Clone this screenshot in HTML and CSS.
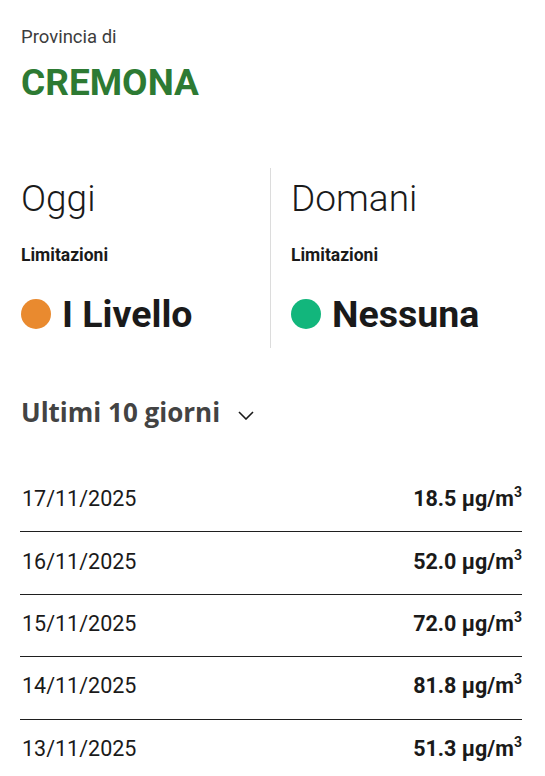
FILE: index.html
```html
<!DOCTYPE html>
<html lang="it">
<head>
<meta charset="utf-8">
<title>Provincia di Cremona</title>
<link rel="stylesheet" href="styles.css">
</head>
<body>
<main class="page">
  <header class="head">
    <p class="kicker">Provincia di</p>
    <h1 class="title">CREMONA</h1>
  </header>

  <section class="days">
    <div class="day">
      <h2 class="day-name">Oggi</h2>
      <p class="label">Limitazioni</p>
      <p class="level"><span class="dot dot-orange"></span>I Livello</p>
    </div>
    <div class="day day-right">
      <h2 class="day-name">Domani</h2>
      <p class="label">Limitazioni</p>
      <p class="level"><span class="dot dot-green"></span>Nessuna</p>
    </div>
  </section>

  <button class="toggle" type="button">
    <span>Ultimi 10 giorni</span>
    <svg class="chev" width="16" height="9" viewBox="0 0 16 9" aria-hidden="true"><path d="M1 1l7 7 7-7" fill="none" stroke="#1a1a1a" stroke-width="1.6"/></svg>
  </button>

  <ul class="rows">
    <li class="row"><span class="date">17/11/2025</span><span class="val">18.5 µg/m<sup>3</sup></span></li>
    <li class="row"><span class="date">16/11/2025</span><span class="val">52.0 µg/m<sup>3</sup></span></li>
    <li class="row"><span class="date">15/11/2025</span><span class="val">72.0 µg/m<sup>3</sup></span></li>
    <li class="row"><span class="date">14/11/2025</span><span class="val">81.8 µg/m<sup>3</sup></span></li>
    <li class="row"><span class="date">13/11/2025</span><span class="val">51.3 µg/m<sup>3</sup></span></li>
  </ul>
</main>
</body>
</html>
```

FILE: styles.css
```css
* { box-sizing: border-box; }
html, body { margin: 0; padding: 0; background: #fff; }
body {
  font-family: Roboto, "Noto Sans", sans-serif;
  color: #1a1a1a;
  overflow: hidden;
}
.page {
  padding: 26px 23px 0 20px;
}
.kicker {
  margin: 0 0 0 1px;
  font-size: 18.5px;
  line-height: 22px;
  color: #3d3d3d;
}
.title {
  margin: 13px 0 0 1px;
  font-size: 37px;
  line-height: 44px;
  font-weight: 700;
  color: #2d7a33;
}
.days {
  display: grid;
  grid-template-columns: 250px 1fr;
  margin-top: 63px;
}
.day {
  padding: 6px 0 14px 1px;
}
.day-right {
  border-left: 1px solid #dcdcdc;
  padding-left: 20px;
}
.day-name {
  margin: 0;
  font-size: 37px;
  line-height: 50px;
  font-weight: 300;
  color: #1a1a1a;
}
.label {
  margin: 21px 0 0;
  font-size: 17.5px;
  line-height: 20px;
  font-weight: 700;
  color: #1a1a1a;
}
.level {
  margin: 29px 0 0;
  display: flex;
  align-items: center;
  gap: 11px;
  font-size: 37.5px;
  line-height: 40px;
  font-weight: 700;
  color: #1a1a1a;
}
.dot {
  width: 30px;
  height: 30px;
  border-radius: 50%;
  flex: none;
}
.dot-orange { background: #e98a2f; }
.dot-green { background: #12b67c; }
.toggle {
  display: flex;
  align-items: center;
  gap: 18px;
  margin: 47px 0 0 1px;
  padding: 0;
  border: 0;
  background: none;
  font-family: "Open Sans", sans-serif;
  font-size: 26px;
  line-height: 34px;
  font-weight: 700;
  color: #434343;
}
.chev { margin-top: 6px; }
.rows {
  list-style: none;
  margin: 41px 0 0;
  padding: 0;
}
.row {
  display: flex;
  justify-content: space-between;
  align-items: center;
  height: 62.4px;
  border-bottom: 1px solid #1f1f1f;
  padding-bottom: 4px;
}
.date {
  padding-left: 2px;
  font-size: 21.5px;
  color: #1a1a1a;
}
.val {
  font-size: 21.5px;
  font-weight: 700;
  color: #1a1a1a;
}
.val sup {
  font-size: 14px;
  line-height: 0;
  vertical-align: 0;
  position: relative;
  top: -9px;
}
```
